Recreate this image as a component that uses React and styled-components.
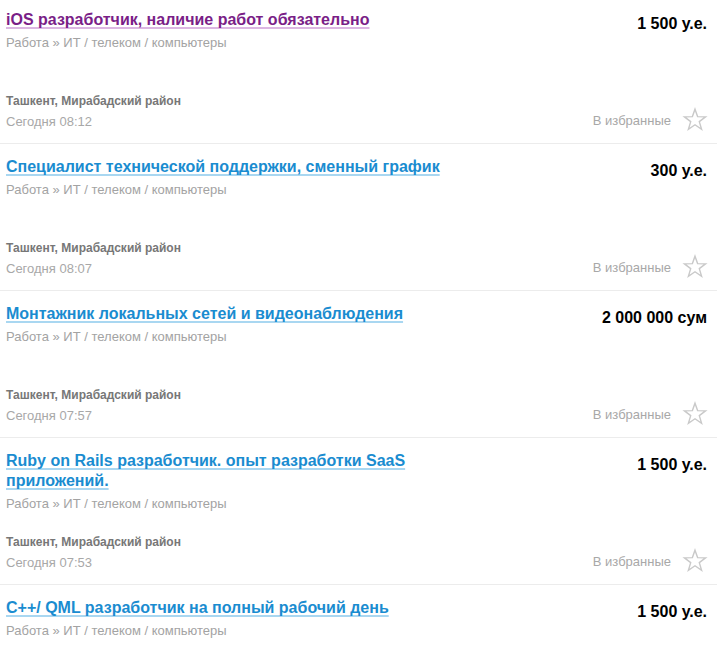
import React from "react";
import styled, { createGlobalStyle } from "styled-components";

const GlobalStyle = createGlobalStyle`
  body {
    margin: 0;
    background: #fff;
    font-family: "Liberation Sans", Arial, sans-serif;
  }
`;

const ads = [
  {
    title: "iOS разработчик, наличие работ обязательно",
    price: "1 500 у.е.",
    time: "Сегодня 08:12",
    visited: true,
  },
  {
    title: "Специалист технической поддержки, сменный график",
    price: "300 у.е.",
    time: "Сегодня 08:07",
  },
  {
    title: "Монтажник локальных сетей и видеонаблюдения",
    price: "2 000 000 сум",
    time: "Сегодня 07:57",
  },
  {
    title: "Ruby on Rails разработчик. опыт разработки SaaS приложений.",
    price: "1 500 у.е.",
    time: "Сегодня 07:53",
  },
  {
    title: "C++/ QML разработчик на полный рабочий день",
    price: "1 500 у.е.",
    time: "Сегодня 07:48",
  },
];

function Star() {
  return (
    <svg width="26" height="26" viewBox="0 0 26 26">
      <path
        d="M13 2.2 L15.6 9.6 L23.6 9.8 L17.3 14.6 L19.6 22.4 L13 17.8 L6.4 22.4 L8.7 14.6 L2.4 9.8 L10.4 9.6 Z"
        fill="none"
        stroke="#c9c9c9"
        strokeWidth="1.4"
        strokeLinejoin="miter"
      />
    </svg>
  );
}

function App() {
  return (
    <>
      <GlobalStyle />
      <Page>
        <List>
          {ads.map((ad, i) => (
            <Item key={i}>
              <Top>
                <Main>
                  <Title href="#" $visited={ad.visited}>
                    {ad.title}
                  </Title>
                  <Category>Работа » ИТ / телеком / компьютеры</Category>
                </Main>
                <Price>{ad.price}</Price>
              </Top>
              <Bottom>
                <Meta>
                  <Location>Ташкент, Мирабадский район</Location>
                  <Time>{ad.time}</Time>
                </Meta>
                <Fav>
                  <span>В избранные</span>
                  <Star />
                </Fav>
              </Bottom>
            </Item>
          ))}
        </List>
      </Page>
    </>
  );
}

const Page = styled.div`
  height: 652px;
  overflow: hidden;
`;

const List = styled.div`
  margin-top: -3px;
  width: 717px;
`;

const Item = styled.div`
  box-sizing: border-box;
  height: 147px;
  padding: 13px 10px 13px 6px;
  border-bottom: 1px solid #ececec;
  display: flex;
  flex-direction: column;
  justify-content: space-between;
`;

const Top = styled.div`
  display: flex;
  justify-content: space-between;
  align-items: flex-start;
`;

const Main = styled.div`
  width: 470px;
  display: flex;
  flex-direction: column;
  align-items: flex-start;
`;

const Title = styled.a`
  font-size: 16px;
  font-weight: bold;
  line-height: 20px;
  color: ${(p) => (p.$visited ? "#7a1e87" : "#1a8cd0")};
  text-decoration: underline;
  text-decoration-thickness: 2px;
  text-underline-offset: 2px;
  text-decoration-skip-ink: none;
  text-decoration-color: ${(p) => (p.$visited ? "#dcb6e2" : "#a9d7f1")};
`;

const Category = styled.div`
  margin-top: 5px;
  font-size: 13px;
  line-height: 16px;
  color: #a3a3a3;
`;

const Price = styled.div`
  margin-top: 4px;
  font-size: 16px;
  font-weight: bold;
  line-height: 20px;
  color: #000;
  white-space: nowrap;
`;

const Bottom = styled.div`
  display: flex;
  justify-content: space-between;
  align-items: flex-end;
`;

const Meta = styled.div`
  display: flex;
  flex-direction: column;
  gap: 5px;
`;

const Location = styled.div`
  font-size: 12px;
  font-weight: bold;
  line-height: 16px;
  color: #777;
`;

const Time = styled.div`
  font-size: 13px;
  line-height: 16px;
  color: #a8a8a8;
`;

const Fav = styled.div`
  display: flex;
  align-items: center;
  gap: 11px;
  font-size: 13px;
  color: #a8a8a8;
  margin-bottom: -3px;
  margin-right: -1px;
`;

export default App;
